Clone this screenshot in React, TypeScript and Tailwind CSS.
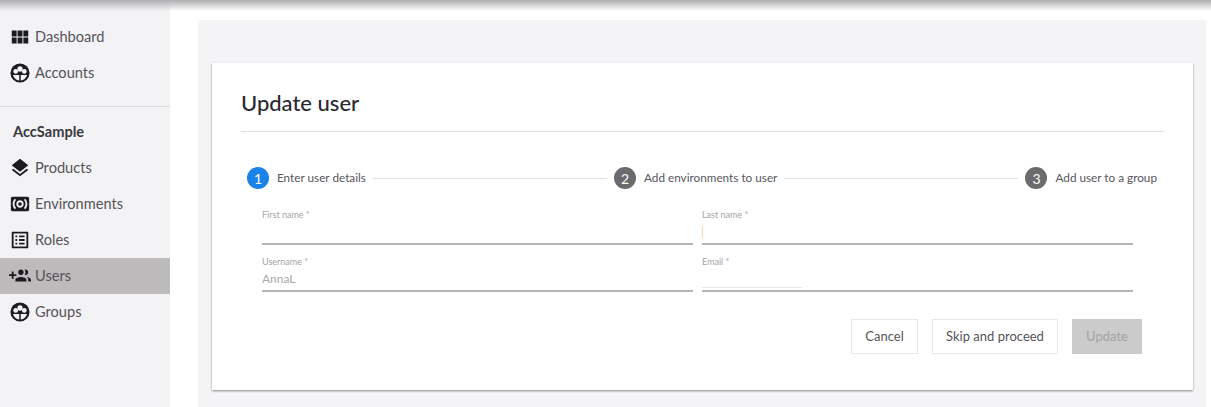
import type { ReactNode } from 'react';
import { MdViewModule, MdLayers, MdSurroundSound, MdOutlineListAlt } from 'react-icons/md';

const font = { fontFamily: 'Lato, "Noto Sans", sans-serif' };

function GroupAddIcon() {
  return (
    <svg width="22" height="22" viewBox="0 0 24 24" fill="currentColor">
      <path d="M8 10H5V7H3v3H0v2h3v3h2v-3h3v-2zm10 1c1.66 0 2.99-1.34 2.99-3S19.66 5 18 5c-.32 0-.63.05-.91.14.57.81.9 1.79.9 2.86s-.34 2.04-.9 2.86c.28.09.59.14.91.14zm-5 0c1.66 0 2.99-1.34 2.99-3S14.66 5 13 5s-3 1.34-3 3 1.34 3 3 3zm6.62 2.16c.83.73 1.38 1.66 1.38 2.84v2h3v-2c0-1.54-2.37-2.49-4.38-2.84zM13 13c-2 0-6 1-6 3v2h12v-2c0-2-4-3-6-3z" />
    </svg>
  );
}

// dark disc with the heads on top and two split wedges below, used by Accounts and Groups
function CircleGroupIcon() {
  return (
    <svg width="22" height="22" viewBox="0 0 24 24">
      <circle cx="12" cy="12" r="10.4" fill="currentColor" />
      <g fill="#f3f2f4">
        <circle cx="7.3" cy="10.3" r="2.6" />
        <circle cx="16.7" cy="10.3" r="2.6" />
        <circle cx="12" cy="7.6" r="2.9" />
        <path d="M4.3 14.1h6.9v6A8.2 8.2 0 0 1 4.3 14.1z" />
        <path d="M19.7 14.1h-6.9v6a8.2 8.2 0 0 0 6.9-6z" />
      </g>
    </svg>
  );
}

function NavItem({ icon, label, active }: { icon: ReactNode; label: string; active?: boolean }) {
  return (
    <div className={`flex h-9 items-center ${active ? 'bg-[#bdbabb]' : ''}`}>
      <div className="w-[35px] shrink-0 pl-[9px] text-[#1d1b1f]">{icon}</div>
      <span className="pb-[1px] text-[14.6px] text-[#55545a]">{label}</span>
    </div>
  );
}

function Step({ n, label, active }: { n: number; label: string; active?: boolean }) {
  return (
    <div className="flex shrink-0 items-center gap-2">
      <div className={`flex h-[22px] w-[22px] items-center justify-center rounded-full text-[14px] text-white ${active ? 'bg-[#1a82e8]' : 'bg-[#6b6a6c]'}`}>{n}</div>
      <span className="text-[11.75px] text-[#58565c]">{label}</span>
    </div>
  );
}

function Field({ label, value, caret, smudge }: { label: string; value?: string; caret?: boolean; smudge?: boolean }) {
  return (
    <div className="flex h-[47px] w-[431px] flex-col justify-end border-b-2 border-[#b5b4b6]">
      <span className="text-[9px] leading-[12px] text-[#a5a4a8]">{label}</span>
      <div className="flex h-[22px] items-center text-[12px] text-[#a9a8ac]">
        {value}
        {caret && <span className="h-[12px] w-px bg-[#f5d9b0]" />}
        {smudge && <span className="mt-[16px] h-px w-[100px] bg-[#e6e6e8]" />}
      </div>
    </div>
  );
}

export default function App() {
  return (
    <div className="relative flex h-[407px] w-[1211px] overflow-hidden bg-white" style={font}>
      <div className="absolute inset-x-0 top-0 z-10 h-[11px] bg-gradient-to-b from-[#aeaeb0] to-transparent" />

      <aside className="h-full w-[170px] shrink-0 bg-[#f3f2f4] pt-[19px]">
        <NavItem icon={<MdViewModule size={22} />} label="Dashboard" />
        <NavItem icon={<CircleGroupIcon />} label="Accounts" />
        <div className="mt-[15px] border-t border-[#dcdbdd]" />
        <div className="flex h-[43px] items-center pl-[13px] pt-[6px] text-[14.6px] font-bold text-[#3a393e]">AccSample</div>
        <NavItem icon={<MdLayers size={22} />} label="Products" />
        <NavItem icon={<MdSurroundSound size={22} />} label="Environments" />
        <NavItem icon={<MdOutlineListAlt size={22} />} label="Roles" />
        <NavItem active icon={<GroupAddIcon />} label="Users" />
        <NavItem icon={<CircleGroupIcon />} label="Groups" />
      </aside>

      <main className="ml-[28px] mt-[20px] h-[387px] w-[1008px] bg-[#f4f3f5] pl-[14px] pr-[13px] pt-[43px]">
        <section className="h-[327px] bg-white px-[29px] shadow-[0_1px_2px_rgba(0,0,0,0.45)]">
          <h1 className="flex h-[69px] items-center border-b border-[#dedddf] pt-[11px] text-[22px] font-medium text-[#2b2a30]">Update user</h1>
          <div className="mt-[35px] flex items-center pl-[6px] pr-[7px]">
            <Step active n={1} label="Enter user details" />
            <div className="mx-[7px] h-px flex-1 bg-[#dfdfe0]" />
            <Step n={2} label="Add environments to user" />
            <div className="mx-[7px] h-px flex-1 bg-[#dfdfe0]" />
            <Step n={3} label="Add user to a group" />
          </div>
          <div className="ml-[21px] mt-[9px] grid w-[871px] grid-cols-[431px_431px] gap-x-[9px] gap-y-0">
            <Field label="First name *" />
            <Field label="Last name *" caret />
            <Field label="Username *" value="AnnaL" />
            <Field label="Email *" smudge />
          </div>
          <div className="mt-[27px] flex justify-end gap-[14px] pr-[22px] text-[13px]">
            <button className="h-[35px] w-[67px] border border-[#e8e8ea] text-[#55545a]">Cancel</button>
            <button className="h-[35px] w-[126px] border border-[#e8e8ea] text-[#55545a]">Skip and proceed</button>
            <button className="h-[35px] w-[70px] bg-[#cbcbcc] text-[#a3a3a5]">Update</button>
          </div>
        </section>
      </main>
    </div>
  );
}
